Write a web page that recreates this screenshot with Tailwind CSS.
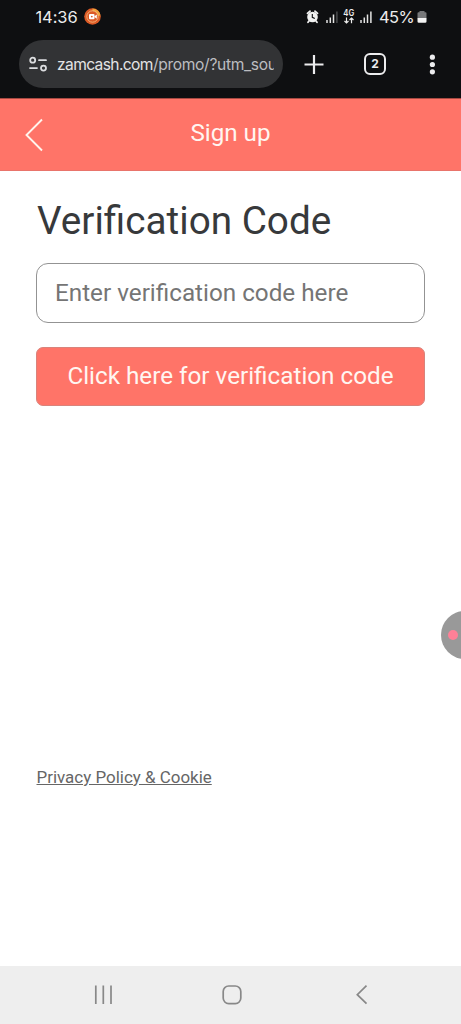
<!DOCTYPE html>
<html lang="en">
<head>
<meta charset="utf-8">
<meta name="viewport" content="width=device-width, initial-scale=1">
<title>Sign up</title>
<script src="https://cdn.jsdelivr.net/npm/@tailwindcss/browser@4"></script>
</head>
<body class="bg-white font-['Roboto',sans-serif]">
<div class="relative flex h-[1024px] w-[461px] flex-col overflow-hidden bg-white">
  <!-- Status bar -->
  <div class="flex h-10 shrink-0 items-start bg-[#0e0f11] pl-[35px] text-[#ececec]">
    <span class="mt-[5px] w-[49px] shrink-0 whitespace-nowrap pl-[0.5px] font-['Inter',sans-serif] text-[16.5px] leading-6 tracking-[-0.1px]">14:36</span>
    <svg class="mt-2 h-[17px] w-[17px] shrink-0" viewBox="0 0 17 17"><circle cx="8.5" cy="8.5" r="8.3" fill="#dc5a26"/><path d="M8.500.4a8.100 8.100 0 0 1 8 7L14 8A5.500 5.500 0 0 0 8.500 3z" fill="#efa33c"/><circle cx="8.500" cy="8.500" r="5.700" fill="none" stroke="#f6c184" stroke-width=".8"/><rect x="5" y="6" width="5.500" height="5.200" rx="1" fill="#fff"/><path d="M10.500 8.200l2.300-1.700v4.200l-2.300-1.700z" fill="#fff"/><circle cx="7.800" cy="8.600" r=".9" fill="#dc5a26"/></svg>
    <svg class="ml-[205px] h-[34px] w-[71px] shrink-0" viewBox="306 0 71 34">
      <circle cx="312.500" cy="17" r="5.300" fill="#f1f1f1"/><path d="M307.500 13.400l2.500-2.200M317.500 13.400l-2.500-2.200M309 21l-1 1.300M316 21l1 1.300" stroke="#f1f1f1" stroke-width="1.800" stroke-linecap="round"/><path d="M312.300 14v3.300l2.500 1.200" fill="none" stroke="#0e0f11" stroke-width="1.100"/>
      <path d="M327 20v3M330.300 17.500v5.500M333.500 14.500v8.500" stroke="#e4e4e4" stroke-width="1.500"/><path d="M336.900 11.500v11.500" stroke="#4b4c4e" stroke-width="1.500"/>
      <text x="343.300" y="16" textLength="11" lengthAdjust="spacingAndGlyphs" font-family="Inter, sans-serif" font-size="8.500" font-weight="600" fill="#ececec">4G</text>
      <path d="M346.500 17.500v5.300M344.500 21l2 2 2-2M351.500 23.300v-5.300M349.500 20l2-2 2 2" fill="none" stroke="#ececec" stroke-width="1.200"/>
      <path d="M361 20v3M364.300 17.500v5.500M367.500 14.500v8.500M370.900 11.500v11.500" stroke="#e4e4e4" stroke-width="1.500"/>
    </svg>
    <span class="ml-[2px] mt-[5px] w-[38px] shrink-0 whitespace-nowrap font-['Inter',sans-serif] text-[16.500px] leading-6 tracking-[-0.600px]">45%</span>
    <svg class="h-[34px] w-[10px] shrink-0" viewBox="0 0 10 34"><path d="M2.500 11h5v1.300h1a1 1 0 0 1 1 1v5h-9v-5a1 1 0 0 1 1-1h1z" fill="#77787a"/><path d="M.5 18h9v3.500a1.300 1.300 0 0 1-1.300 1.300H1.800A1.300 1.300 0 0 1 .5 21.500z" fill="#f3f3f3"/></svg>
  </div>

  <!-- Browser toolbar -->
  <div class="flex h-[58px] shrink-0 items-start bg-[#0e0f11] pl-[19px]">
    <div class="flex h-12 w-[264px] shrink-0 items-center rounded-full bg-[#323335] pl-[10px]">
      <svg class="h-[18px] w-[18px] shrink-0" viewBox="0 0 18 18" fill="none" stroke="#dcdddf" stroke-width="1.800" stroke-linecap="round"><circle cx="3.700" cy="5.200" r="2.500"/><path d="M10 5.200h7M1 13.100h7"/><circle cx="14.500" cy="13.100" r="2.500"/></svg>
      <div class="ml-[10px] w-[217px] overflow-hidden whitespace-nowrap pt-[2px] font-['Inter',sans-serif] text-[15.600px] leading-6 tracking-[-0.620px] text-[#e3e3e4]">zamcash.com<span class="tracking-[-0.320px] text-[#bcbdc0]">/promo/?utm_sou</span></div>
    </div>
    <svg class="ml-[20px] h-12 w-[22px] shrink-0" viewBox="0 0 22 48"><path d="M11 15v19M1.500 24.500h19" stroke="#ececee" stroke-width="2.200"/></svg>
    <div class="ml-[39px] mt-[13px] flex h-[22px] w-[22px] shrink-0 items-center justify-center rounded-[6px] border-2 border-[#ececee] font-['Inter',sans-serif] text-[12px] font-bold leading-none text-[#ececee]">2</div>
    <svg class="ml-[38px] h-12 w-4 shrink-0" viewBox="0 0 16 48" fill="#ececee"><circle cx="8.400" cy="17.200" r="2.600"/><circle cx="8.400" cy="24.500" r="2.600"/><circle cx="8.400" cy="31.800" r="2.600"/></svg>
  </div>

  <!-- Page header -->
  <header class="grid h-[73px] shrink-0 grid-cols-[60px_1fr_60px] items-center border-t border-b border-t-[#a84a43] border-b-[#e9746b] bg-[#ff7468]">
    <svg class="ml-[25px] h-[34px] w-5" viewBox="0 0 20 34" fill="none" stroke="#fff4ec" stroke-width="1.900"><path d="M17 1.500L1.500 17 17 32.500"/></svg>
    <h1 class="-mt-[3px] text-center text-[24.200px] leading-7 text-[#fff6f1]">Sign up</h1>
  </header>

  <!-- Verification form -->
  <main class="flex flex-1 flex-col items-start px-9">
    <h2 class="mt-[26px] whitespace-nowrap pl-px text-[38.700px] leading-[48px] text-[#37393b]">Verification Code</h2>
    <input type="text" placeholder="Enter verification code here" class="mt-[18px] h-[60px] w-[389px] rounded-[12px] border border-[#939393] px-[18px] text-[24.250px] placeholder:text-[#757575]">
    <button class="mt-6 h-[59px] w-[389px] rounded-[7px] border border-[#d9837b] bg-[#ff7468] text-[24.250px] text-[#fff6f1]">Click here for verification code</button>
    <a href="#" class="ml-[0.5px] mt-[359px] whitespace-nowrap text-[16.950px] leading-6 text-[#666] underline">Privacy Policy &amp; Cookie</a>
  </main>

  <!-- Screen recorder bubble -->
  <div class="absolute left-[441px] top-[611px] h-[48px] w-[48px] rounded-full bg-[#999]"><div class="ml-[7px] mt-[19px] h-[10px] w-[10px] rounded-full bg-[#ff8097]"></div></div>

  <!-- Navigation bar -->
  <nav class="flex h-[58px] shrink-0 items-center bg-[#eee]">
    <svg class="ml-[94px] h-5 w-5" viewBox="0 0 20 20" stroke="#888" stroke-width="1.700"><path d="M1.800.5v18.500M9.300.5v18.500M17 .5v18.500"/></svg>
    <svg class="ml-[108px] h-5 w-5" viewBox="0 0 20 20" fill="none" stroke="#888" stroke-width="1.700"><rect x="1.200" y="1" width="17.600" height="17.600" rx="5.500"/></svg>
    <svg class="ml-[114px] h-5 w-3" viewBox="0 0 12 20" fill="none" stroke="#888" stroke-width="1.700"><path d="M10.500.7L1.300 9.700l9.200 9"/></svg>
  </nav>
</div>
</body>
</html>
